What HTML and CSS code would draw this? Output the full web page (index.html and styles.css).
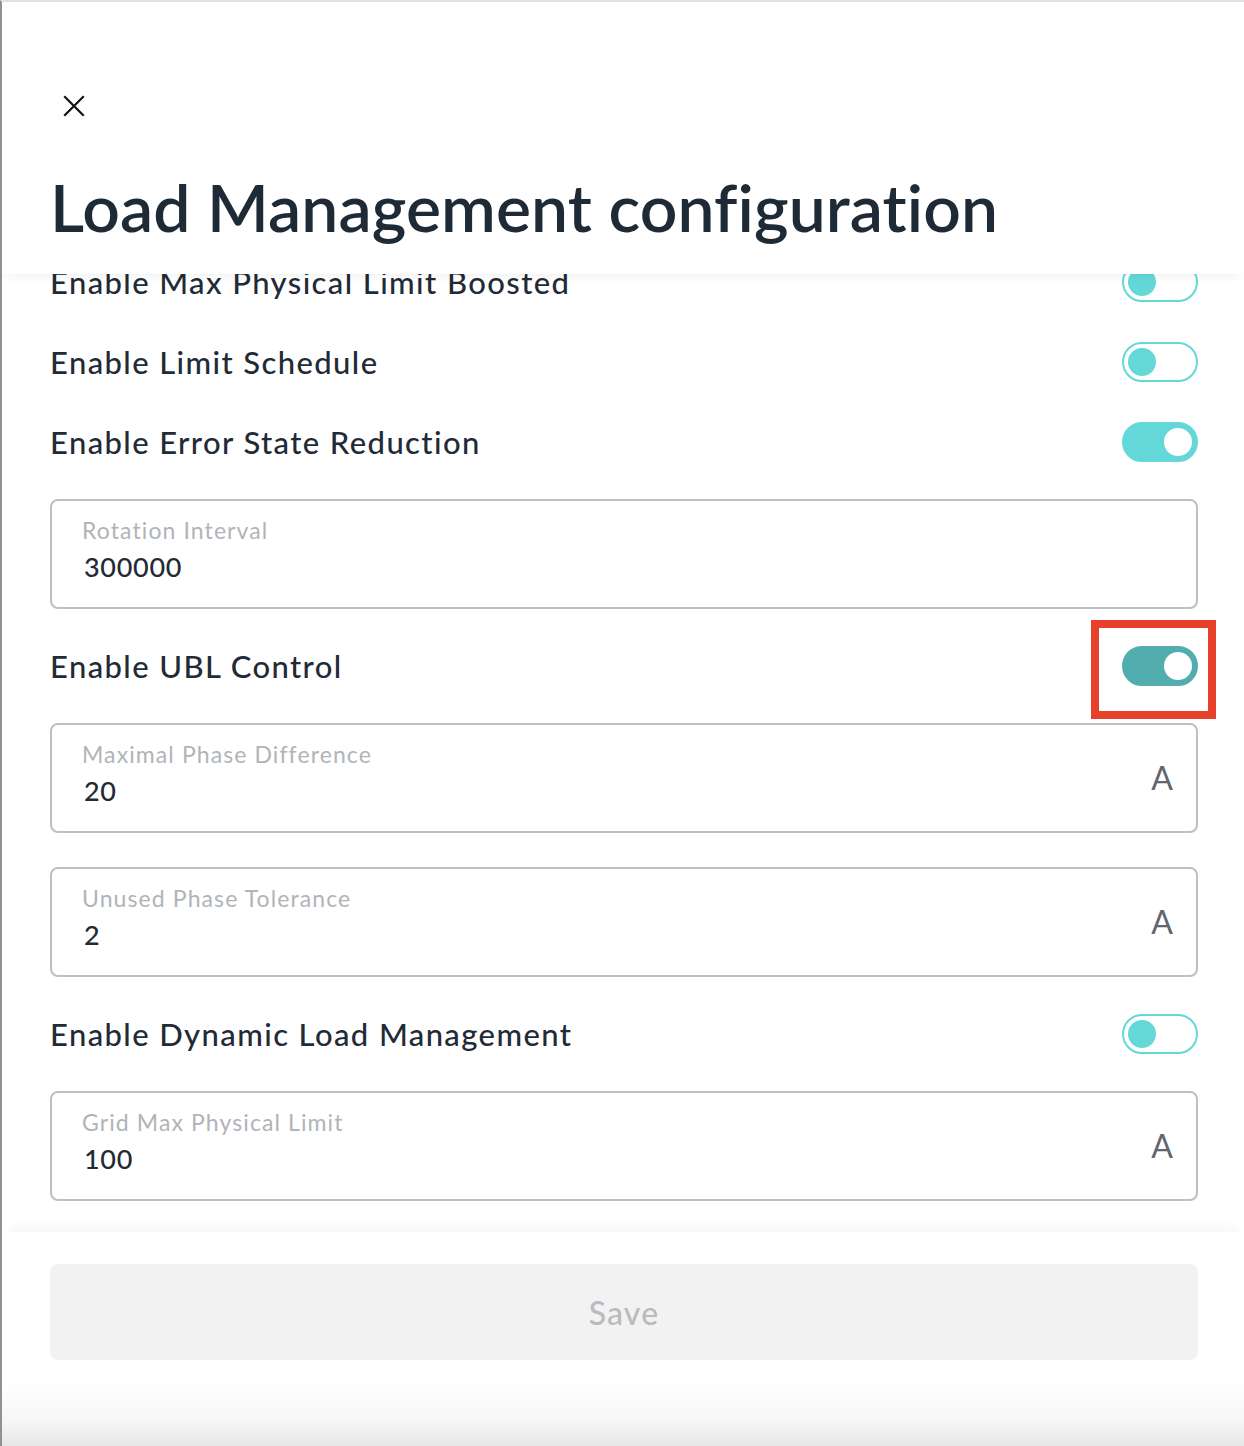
FILE: index.html
```html
<!DOCTYPE html>
<html>
<head>
<meta charset="utf-8">
<link rel="stylesheet" href="styles.css">
</head>
<body>
<div class="page">
  <header class="header">
    <button class="close" aria-label="Close">
      <svg width="22" height="22" viewBox="0 0 22 22"><path d="M2 2 L20 20 M20 2 L2 20" stroke="#111" stroke-width="2.2" stroke-linecap="square" fill="none"/></svg>
    </button>
    <h1 class="title">Load Management configuration</h1>
  </header>
  <main class="content">
    <div class="list">
      <div class="row"><span class="row-label">Enable Max Physical Limit Boosted</span><span class="toggle"><span class="knob"></span></span></div>
      <div class="row"><span class="row-label">Enable Limit Schedule</span><span class="toggle"><span class="knob"></span></span></div>
      <div class="row"><span class="row-label">Enable Error State Reduction</span><span class="toggle on"><span class="knob"></span></span></div>
      <div class="field-wrap"><div class="field"><div class="field-text"><span class="field-label">Rotation Interval</span><span class="field-value">300000</span></div></div></div>
      <div class="row"><span class="row-label">Enable UBL Control</span><span class="toggle on dark highlight"><span class="knob"></span><span class="mark"></span></span></div>
      <div class="field-wrap"><div class="field"><div class="field-text"><span class="field-label">Maximal Phase Difference</span><span class="field-value">20</span></div><span class="suffix">A</span></div></div>
      <div class="field-wrap"><div class="field"><div class="field-text"><span class="field-label">Unused Phase Tolerance</span><span class="field-value">2</span></div><span class="suffix">A</span></div></div>
      <div class="row"><span class="row-label">Enable Dynamic Load Management</span><span class="toggle"><span class="knob"></span></span></div>
      <div class="field-wrap"><div class="field"><div class="field-text"><span class="field-label">Grid Max Physical Limit</span><span class="field-value">100</span></div><span class="suffix">A</span></div></div>
    </div>
  </main>
  <footer class="footer">
    <button class="save" disabled>Save</button>
  </footer>
</div>
</body>
</html>
```
FILE: styles.css
```css
html, body {
  margin: 0;
  padding: 0;
  background: #ffffff;
}
body {
  font-family: Lato, "Noto Sans", sans-serif;
  color: #1f2b36;
}
.page {
  height: 1446px;
  box-sizing: border-box;
  border-left: 2px solid #8d9298;
  border-top: 2px solid #e2e2d8;
  display: flex;
  flex-direction: column;
  overflow: hidden;
}
.header {
  position: relative;
  z-index: 2;
  background: #fff;
  height: 272px;
  flex: none;
  box-sizing: border-box;
  padding: 93px 46px 0 48px;
  box-shadow: 0 6px 10px -4px rgba(0,0,0,0.06);
}
.close {
  display: block;
  border: 0;
  background: none;
  padding: 0;
  margin: 0 0 0 13px;
  width: 22px;
  height: 22px;
  cursor: pointer;
}
.close svg { display: block; }
.title {
  margin: 54px 0 0 0;
  font-size: 66px;
  line-height: 72px;
  font-weight: 600;
  letter-spacing: 0.1px;
  color: #1e2a35;
}
.content {
  flex: 1;
  overflow: hidden;
  position: relative;
  z-index: 1;
  padding: 0 46px 0 48px;
}
.list {
  margin-top: -32px;
  display: flex;
  flex-direction: column;
}
.row {
  height: 80px;
  display: flex;
  align-items: center;
  justify-content: space-between;
}
.row-label {
  font-size: 31px;
  font-weight: 500;
  letter-spacing: 1.4px;
  color: #1f2b36;
}
.toggle {
  position: relative;
  width: 76px;
  height: 40px;
  box-sizing: border-box;
  border: 2px solid #64d8d8;
  border-radius: 20px;
  background: #fff;
}
.toggle .knob {
  position: absolute;
  top: 4px;
  left: 4px;
  width: 28px;
  height: 28px;
  border-radius: 50%;
  background: #64d8d8;
}
.toggle.on {
  background: #64d8d8;
}
.toggle.on .knob {
  left: auto;
  right: 4px;
  background: #fff;
}
.toggle.dark {
  background: #52aeae;
  border-color: #52aeae;
}
.toggle .mark {
  position: absolute;
  left: -33px;
  top: -28px;
  width: 125px;
  height: 99px;
  box-sizing: border-box;
  border: 8px solid #e8412b;
}
.field-wrap {
  padding: 17px 0;
}
.field {
  height: 110px;
  box-sizing: border-box;
  border: 2px solid #bdc0c4;
  border-radius: 8px;
  display: flex;
  align-items: center;
  justify-content: space-between;
  padding: 0 23px 0 30px;
}
.field-text {
  display: flex;
  flex-direction: column;
  gap: 4px;
  margin-top: -6px;
}
.field-label {
  font-size: 23px;
  line-height: 28px;
  letter-spacing: 1.1px;
  color: #b0b4b8;
}
.field-value {
  font-size: 27px;
  line-height: 38px;
  font-weight: 500;
  letter-spacing: 0.7px;
  color: #1f2b36;
  margin-left: 2px;
}
.suffix {
  font-size: 32px;
  color: #5f666d;
  margin-top: -2px;
}
.footer {
  position: relative;
  z-index: 2;
  flex: none;
  height: 214px;
  box-sizing: border-box;
  padding: 32px 46px 0 48px;
  background: linear-gradient(to bottom, #ffffff 0, #ffffff 150px, #f6f6f6 190px, #e6e6e6 214px);
  box-shadow: 0 -8px 14px -6px rgba(0,0,0,0.05);
}
.save {
  display: block;
  width: 100%;
  height: 96px;
  border: 0;
  border-radius: 8px;
  background: #f2f2f2;
  font-family: Lato, "Noto Sans", sans-serif;
  font-size: 32px;
  font-weight: 500;
  color: #b9bbbe;
  letter-spacing: 1.2px;
}
```
